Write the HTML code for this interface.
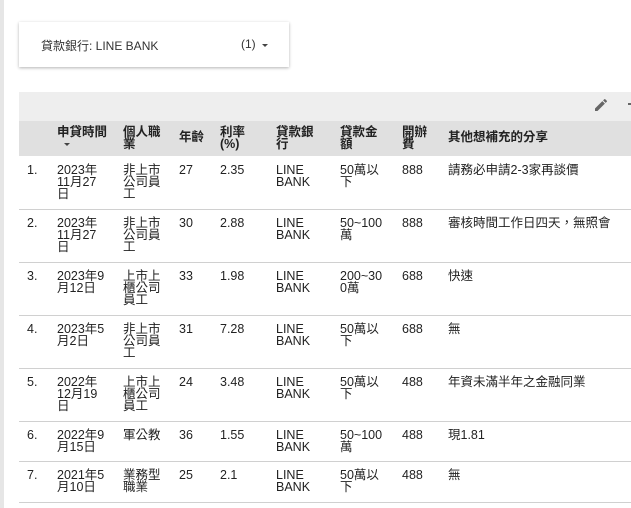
<!DOCTYPE html>
<html><head><meta charset="utf-8"><style>
body{margin:0;width:631px;height:508px;background:#fff;position:relative;overflow:hidden;font-family:"Liberation Sans","Noto Sans CJK TC",sans-serif;color:#222;}
.lb{position:absolute;left:0;top:0;width:4px;height:508px;background:#e6e6e6;}
.filt{position:absolute;left:19px;top:22px;width:270px;height:45px;background:#fff;box-shadow:0 1px 3px rgba(0,0,0,.3);font-size:12px;}
.filt .t{position:absolute;left:22px;top:15px;color:#333;}
.filt .c{position:absolute;left:222px;top:15px;color:#333;font-size:12px;}
.tri{position:absolute;width:0;height:0;border-left:3px solid transparent;border-right:3px solid transparent;border-top:3px solid #444;}
.bar{position:absolute;left:19px;top:92px;width:612px;height:29px;background:#eeeeee;}
.hdr{position:absolute;left:19px;top:121px;width:612px;height:35px;background:#e0e0e0;}
.c0{position:absolute;font-size:12.5px;line-height:12px;}
.h{font-weight:bold;color:#222;}
.line{position:absolute;left:19px;width:612px;height:1px;background:#d0d0d0;}
</style></head><body>
<div class="lb"></div>
<div class="filt"><span class="t">貸款銀行: LINE BANK</span><span class="c">(1)</span><div class="tri" style="left:243px;top:22px"></div></div>
<div class="bar"></div>
<svg style="position:absolute;left:593px;top:97px" width="16" height="16" viewBox="0 0 24 24"><path d="M3 17.25V21h3.75L17.81 9.94l-3.75-3.75L3 17.25zM20.71 7.04a1 1 0 000-1.41l-2.34-2.34a1 1 0 00-1.41 0l-1.83 1.83 3.75 3.75 1.83-1.83z" fill="#666"/></svg>
<div style="position:absolute;left:628px;top:103px;width:3px;height:1.5px;background:#666"></div>
<div class="hdr"></div>
<div class="c0 h" style="left:57px;top:126px">申貸時間</div><div class="tri" style="left:64px;top:143px"></div>
<div class="c0 h" style="left:123px;top:126px">個人職<br>業</div>
<div class="c0 h" style="left:179px;top:131px">年齡</div>
<div class="c0 h" style="left:220px;top:126px">利率<br>(%)</div>
<div class="c0 h" style="left:276px;top:126px">貸款銀<br>行</div>
<div class="c0 h" style="left:340px;top:126px">貸款金<br>額</div>
<div class="c0 h" style="left:402px;top:126px">開辦<br>費</div>
<div class="c0 h" style="left:448px;top:131px">其他想補充的分享</div>
<div id="rows"></div>
<script>
var R=[[156,"1.","2023年<br>11月27<br>日","非上市<br>公司員<br>工","27","2.35","50萬以<br>下","888","請務必申請2-3家再談價"],
[209,"2.","2023年<br>11月27<br>日","非上市<br>公司員<br>工","30","2.88","50~100<br>萬","888","審核時間工作日四天，無照會"],
[262,"3.","2023年9<br>月12日","上市上<br>櫃公司<br>員工","33","1.98","200~30<br>0萬","688","快速"],
[315,"4.","2023年5<br>月2日","非上市<br>公司員<br>工","31","7.28","50萬以<br>下","688","無"],
[368,"5.","2022年<br>12月19<br>日","上市上<br>櫃公司<br>員工","24","3.48","50萬以<br>下","488","年資未滿半年之金融同業"],
[421,"6.","2022年9<br>月15日","軍公教","36","1.55","50~100<br>萬","488","現1.81"],
[461,"7.","2021年5<br>月10日","業務型<br>職業","25","2.1","50萬以<br>下","488","無"]];
var X=[27,57,123,179,220,340,402,448],h="";
var ends=[209,262,315,368,421,461,502];
R.forEach(function(r,i){var y=r[0]+8;var v=[r[1],r[2],r[3],r[4],r[5],r[6],r[7],r[8]];
v.forEach(function(t,j){h+='<div class="c0" style="left:'+X[j]+'px;top:'+y+'px">'+t+'</div>';});
h+='<div class="c0" style="left:276px;top:'+y+'px">LINE<br>BANK</div>';
h+='<div class="line" style="top:'+ends[i]+'px"></div>';});
document.getElementById("rows").innerHTML=h;
</script>
</body></html>
